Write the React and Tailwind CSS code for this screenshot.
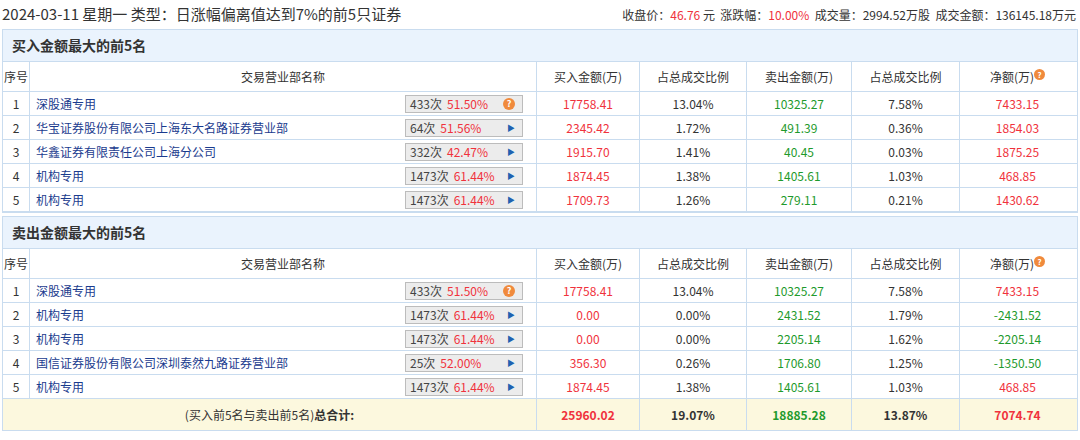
const F = { fontFamily: '"Microsoft YaHei","Noto Sans CJK SC","Liberation Sans",sans-serif' };

const buy = [
  ["1","深股通专用","433次","51.50%","q","17758.41","13.04%","10325.27","7.58%","7433.15"],
  ["2","华宝证券股份有限公司上海东大名路证券营业部","64次","51.56%","a","2345.42","1.72%","491.39","0.36%","1854.03"],
  ["3","华鑫证券有限责任公司上海分公司","332次","42.47%","a","1915.70","1.41%","40.45","0.03%","1875.25"],
  ["4","机构专用","1473次","61.44%","a","1874.45","1.38%","1405.61","1.03%","468.85"],
  ["5","机构专用","1473次","61.44%","a","1709.73","1.26%","279.11","0.21%","1430.62"],
];
const sell = [
  ["1","深股通专用","433次","51.50%","q","17758.41","13.04%","10325.27","7.58%","7433.15"],
  ["2","机构专用","1473次","61.44%","a","0.00","0.00%","2431.52","1.79%","-2431.52"],
  ["3","机构专用","1473次","61.44%","a","0.00","0.00%","2205.14","1.62%","-2205.14"],
  ["4","国信证券股份有限公司深圳泰然九路证券营业部","25次","52.00%","a","356.30","0.26%","1706.80","1.25%","-1350.50"],
  ["5","机构专用","1473次","61.44%","a","1874.45","1.38%","1405.61","1.03%","468.85"],
];

function Q({ small }) {
  return <span className={`inline-flex items-center justify-center rounded-full bg-[#f08a3c] text-white font-bold ${small ? "w-[11px] h-[11px] text-[8px]" : "w-[12px] h-[12px] text-[9px]"}`}>?</span>;
}

const cols = "grid grid-cols-[27px_507px_103px_107px_105px_108px_115px]";
const cell = "border-r border-[#c9dcef] flex items-center justify-center";

function Header() {
  return (
    <div className={`${cols} h-[30px] border-b border-[#c9dcef] text-[12px] text-[#333]`}>
      <div className={cell}>序号</div>
      <div className={cell}>交易营业部名称</div>
      <div className={cell}>买入金额(万)</div>
      <div className={cell}>占总成交比例</div>
      <div className={cell}>卖出金额(万)</div>
      <div className={cell}>占总成交比例</div>
      <div className="flex items-center justify-center">净额(万)<span className="-mt-2"><Q small /></span></div>
    </div>
  );
}

function Row({ r }) {
  const neg = r[9].startsWith("-");
  return (
    <div className={`${cols} h-[24px] border-b border-[#c9dcef] text-[12px]`}>
      <div className={`${cell} text-[#333]`}>{r[0]}</div>
      <div className="border-r border-[#c9dcef] flex items-center pl-[6px] pr-[13px]">
        <span className="flex-1 text-[#1a3b8e] whitespace-nowrap">{r[1]}</span>
        <div className="w-[118px] h-[18px] bg-[#ececec] border border-[#bcbcbc] flex items-center pl-[4px] pr-[7px] text-[#444] whitespace-nowrap">
          <span className="mr-[5px]">{r[2]}</span>
          <span className="text-[#f0323c] flex-1">{r[3]}</span>
          {r[4] === "q" ? <Q /> : <span className="text-[#1f62b0] text-[8px]">▶</span>}
        </div>
      </div>
      <div className={`${cell} text-[#f0323c]`}>{r[5]}</div>
      <div className={`${cell} text-[#333]`}>{r[6]}</div>
      <div className={`${cell} text-[#1e9a2c]`}>{r[7]}</div>
      <div className={`${cell} text-[#333]`}>{r[8]}</div>
      <div className={`flex items-center justify-center ${neg ? "text-[#1e9a2c]" : "text-[#f0323c]"}`}>{r[9]}</div>
    </div>
  );
}

function Section({ title, rows, total }) {
  return (
    <div className="border border-[#c9dcef]">
      <div className="h-[32px] bg-[#eaf3fd] border-b border-[#c9dcef] flex items-center pl-[9px] text-[14px] font-bold text-[#333]">{title}</div>
      <Header />
      {rows.map((r, i) => <Row key={i} r={r} />)}
      {total && (
        <div className={`${cols} h-[31px] bg-[#fcf8de] text-[12px]`}>
          <div className="col-span-2 border-r border-[#c9dcef] flex items-center justify-center text-[#333]">(买入前5名与卖出前5名)<b>总合计:</b></div>
          <div className={`${cell} text-[#f0323c] font-bold`}>25960.02</div>
          <div className={`${cell} text-[#333] font-bold`}>19.07%</div>
          <div className={`${cell} text-[#1e9a2c] font-bold`}>18885.28</div>
          <div className={`${cell} text-[#333] font-bold`}>13.87%</div>
          <div className="flex items-center justify-center text-[#f0323c] font-bold">7074.74</div>
        </div>
      )}
    </div>
  );
}

export default function App() {
  return (
    <div style={F} className="w-[1080px] h-[440px] bg-white px-[2px] overflow-hidden">
      <div className="h-[29px] flex items-center justify-between">
        <span className="text-[15px] text-[#333]">2024-03-11 星期一 类型：日涨幅偏离值达到7%的前5只证券</span>
        <span className="text-[12px] text-[#333] pr-[2px]">收盘价：<span className="text-[#f0323c]">46.76</span> 元&nbsp; 涨跌幅：<span className="text-[#f0323c]">10.00%</span>&nbsp; 成交量：2994.52万股&nbsp; 成交金额：136145.18万元</span>
      </div>
      <Section title="买入金额最大的前5名" rows={buy} />
      <div className="h-[3px]" />
      <Section title="卖出金额最大的前5名" rows={sell} total />
    </div>
  );
}
